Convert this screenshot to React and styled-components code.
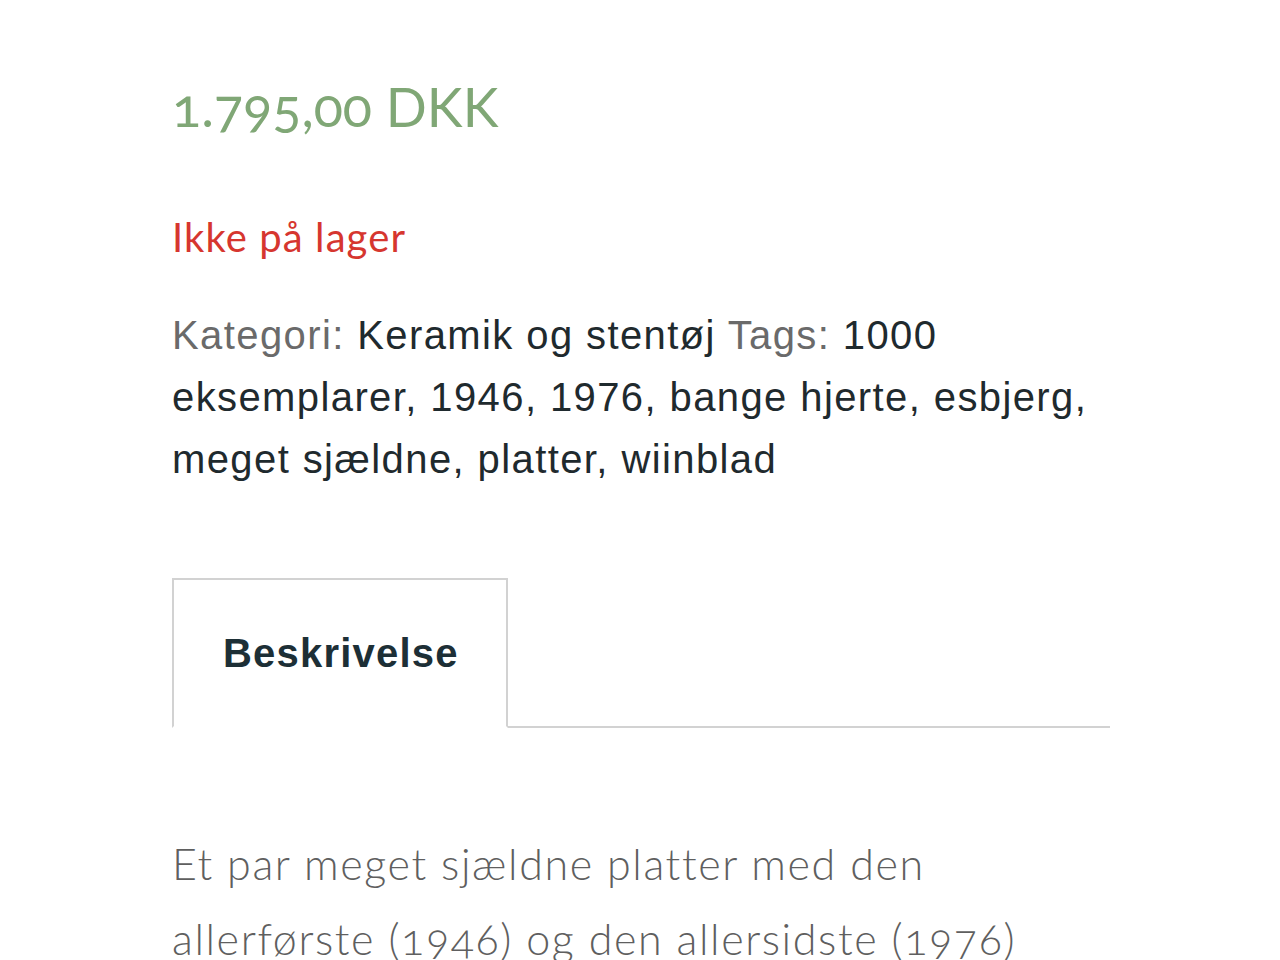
import styled, { createGlobalStyle } from "styled-components";

const GlobalStyle = createGlobalStyle`
  body {
    margin: 0;
    background: #ffffff;
  }
`;

const Page = styled.div`
  width: 938px;
  padding: 77px 0 0 172px;
  overflow: hidden;
  height: 883px;
`;

const Price = styled.p`
  margin: 0;
  font-family: Lato, "Open Sans", sans-serif;
  font-weight: 400;
  font-size: 54px;
  line-height: 60px;
  color: #80a776;
  font-variant-numeric: oldstyle-nums;
`;

const Stock = styled.p`
  margin: 75px 0 0;
  font-family: Lato, "Open Sans", sans-serif;
  font-size: 40px;
  letter-spacing: 1.1px;
  line-height: 50px;
  color: #d6362f;
`;

const Meta = styled.div`
  margin: 42px 0 0;
  font-family: "Liberation Sans", Arial, sans-serif;
  font-size: 40px;
  letter-spacing: 1.4px;
  line-height: 62px;
  color: #6a6a6a;
`;

const MetaValue = styled.span`
  color: #1f2a2e;
`;

const Tabs = styled.div`
  display: flex;
  margin-top: 88px;
  border-bottom: 2px solid #d2d2d2;
`;

const Tab = styled.div`
  box-sizing: border-box;
  width: 336px;
  height: 150px;
  margin-bottom: -2px;
  padding: 0 0 0 49px;
  display: flex;
  align-items: center;
  border: 2px solid #d2d2d2;
  border-bottom: 2px solid #ffffff;
  background: #ffffff;
  font-family: "Liberation Sans", Arial, sans-serif;
  font-weight: 700;
  font-size: 40px;
  letter-spacing: 1.2px;
  color: #1d2f36;
`;

const Description = styled.p`
  margin: 98px 0 0;
  font-family: Lato, "Open Sans", sans-serif;
  font-weight: 300;
  font-size: 43px;
  letter-spacing: 1.6px;
  line-height: 75px;
  color: #5f5f5f;
  font-variant-numeric: oldstyle-nums;
`;

export default function App() {
  return (
    <>
      <GlobalStyle />
      <Page>
        <Price>1.795,00 DKK</Price>
        <Stock>Ikke på lager</Stock>
        <Meta>
          Kategori: <MetaValue>Keramik og stentøj</MetaValue> Tags:{" "}
          <MetaValue>
            1000 eksemplarer, 1946, 1976, bange hjerte, esbjerg, meget sjældne,
            platter, wiinblad
          </MetaValue>
        </Meta>
        <Tabs>
          <Tab>Beskrivelse</Tab>
        </Tabs>
        <Description>
          Et par meget sjældne platter med den allerførste (1946) og den
          allersidste (1976) platte
        </Description>
      </Page>
    </>
  );
}
